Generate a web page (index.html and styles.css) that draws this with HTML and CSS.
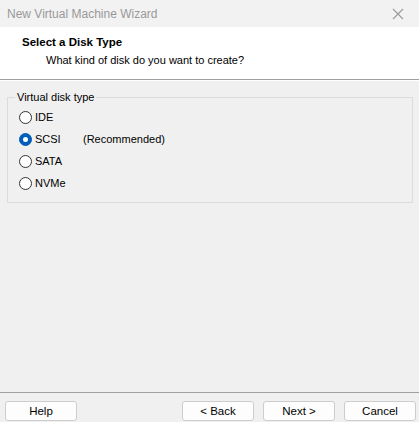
FILE: index.html
```html
<!DOCTYPE html>
<html>
<head>
<meta charset="utf-8">
<link rel="stylesheet" href="styles.css">
</head>
<body>
<div class="window">
  <div class="titlebar">
    <span class="title">New Virtual Machine Wizard</span>
    <svg class="close" width="12" height="12" viewBox="0 0 12 12"><path d="M1 1 L11 11 M11 1 L1 11" stroke="#9a9a9a" stroke-width="1.1" fill="none"/></svg>
  </div>
  <div class="header">
    <div class="h-title">Select a Disk Type</div>
    <div class="h-sub">What kind of disk do you want to create?</div>
  </div>
  <div class="content">
    <fieldset class="group">
      <legend class="legend">Virtual disk type</legend>
      <div class="option"><span class="radio"></span><span class="label">IDE</span></div>
      <div class="option"><span class="radio checked"></span><span class="label">SCSI</span><span class="note">(Recommended)</span></div>
      <div class="option"><span class="radio"></span><span class="label">SATA</span></div>
      <div class="option"><span class="radio"></span><span class="label">NVMe</span></div>
    </fieldset>
  </div>
  <div class="footer">
    <button class="btn">Help</button>
    <div class="spacer"></div>
    <button class="btn">&lt; Back</button>
    <button class="btn next">Next &gt;</button>
    <button class="btn cancel">Cancel</button>
  </div>
</div>
</body>
</html>
```
FILE: styles.css
```css
html, body {
  margin: 0;
  padding: 0;
  background: #f0f0f0;
}
body {
  font-family: "Liberation Sans", Arial, sans-serif;
  font-size: 11px;
  color: #000;
}
.window {
  width: 419px;
  height: 422px;
  display: flex;
  flex-direction: column;
  overflow: hidden;
}
.titlebar {
  height: 27px;
  background: #f2f2f2;
  display: flex;
  align-items: center;
  padding: 0 15px 0 7px;
  flex-shrink: 0;
}
.title {
  flex: 1;
  color: #999;
  font-size: 12px;
}
.close {
  margin-top: 1px;
}
.header {
  height: 52px;
  background: #fff;
  border-bottom: 1px solid #a0a0a0;
  box-shadow: 0 1px 0 #fff;
  flex-shrink: 0;
  box-sizing: content-box;
}
.h-title {
  font-weight: bold;
  font-size: 11.5px;
  padding: 7px 0 0 22px;
  line-height: 16px;
}
.h-sub {
  padding: 2px 0 0 46px;
  line-height: 16px;
}
.content {
  flex: 1;
  padding: 10px 6px 0 7px;
}
.group {
  margin: 0;
  border: 1px solid #dcdcdc;
  padding: 2px 0 0 11px;
  height: 113px;
  box-sizing: border-box;
}
.legend {
  padding: 0 2px;
  margin-left: -4px;
  line-height: 14px;
}
.option {
  display: flex;
  align-items: center;
  height: 22px;
}
.radio {
  width: 11px;
  height: 11px;
  border: 1px solid #333;
  border-radius: 50%;
  background: #fff;
  margin-right: 3px;
  position: relative;
}
.radio.checked {
  background: #005fb8;
  border-color: #005fb8;
}
.radio.checked::after {
  content: "";
  position: absolute;
  left: 3px;
  top: 3px;
  width: 5px;
  height: 5px;
  border-radius: 50%;
  background: #fff;
}
.label {
  width: 48px;
}
.footer {
  height: 30px;
  border-top: 1px solid #a0a0a0;
  display: flex;
  align-items: flex-start;
  padding: 8px 3px 0 5px;
  flex-shrink: 0;
  box-sizing: border-box;
}
.spacer {
  flex: 1;
}
.btn {
  width: 72px;
  height: 20px;
  background: #fdfdfd;
  border: 1px solid #cdcdcd;
  border-radius: 3px;
  font-family: inherit;
  font-size: 11.5px;
  color: #000;
  padding: 0;
  margin: 0;
}
.next { margin-left: 9px; }
.cancel { margin-left: 9px; }
```
